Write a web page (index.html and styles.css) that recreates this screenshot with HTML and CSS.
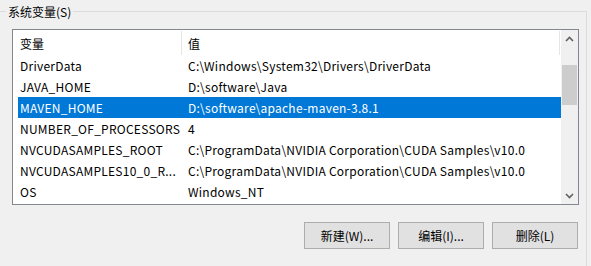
FILE: index.html
```html
<!DOCTYPE html>
<html lang="zh-CN">
<head>
    <meta charset="UTF-8">
    <meta name="viewport" content="width=device-width, initial-scale=1.0">
    <title>系统变量</title>
    <link rel="stylesheet" href="styles.css">
</head>
<body>
    <fieldset class="group">
        <legend>系统变量(S)</legend>
        <div class="listbox">
            <div class="list-main">
                <div class="list-header">
                    <div class="col-name">变量</div>
                    <div class="col-value">值</div>
                </div>
                <div class="row"><span>DriverData</span><span>C:\Windows\System32\Drivers\DriverData</span></div>
                <div class="row"><span>JAVA_HOME</span><span>D:\software\Java</span></div>
                <div class="row selected"><span>MAVEN_HOME</span><span>D:\software\apache-maven-3.8.1</span></div>
                <div class="row"><span>NUMBER_OF_PROCESSORS</span><span>4</span></div>
                <div class="row"><span>NVCUDASAMPLES_ROOT</span><span>C:\ProgramData\NVIDIA Corporation\CUDA Samples\v10.0</span></div>
                <div class="row"><span>NVCUDASAMPLES10_0_R...</span><span>C:\ProgramData\NVIDIA Corporation\CUDA Samples\v10.0</span></div>
                <div class="row"><span>OS</span><span>Windows_NT</span></div>
            </div>
            <div class="scrollbar">
                <div class="arrow">
                    <svg width="9" height="6" viewBox="0 0 9 6"><path d="M1 5 L4.5 1.5 L8 5" fill="none" stroke="#606060" stroke-width="1.6"/></svg>
                </div>
                <div class="track"><div class="thumb"></div></div>
                <div class="arrow">
                    <svg width="9" height="6" viewBox="0 0 9 6"><path d="M1 1 L4.5 4.5 L8 1" fill="none" stroke="#606060" stroke-width="1.6"/></svg>
                </div>
            </div>
        </div>
        <div class="buttons">
            <button class="btn">新建(W)...</button>
            <button class="btn">编辑(I)...</button>
            <button class="btn">删除(L)</button>
        </div>
    </fieldset>
</body>
</html>
```

FILE: styles.css
```css
html, body {
    margin: 0;
    height: 100%;
    overflow: hidden;
}
body {
    background-color: #f0f0f0;
    color: #000;
    font-family: "Microsoft YaHei UI", "Noto Sans CJK SC", sans-serif;
    font-size: 12px;
}
.group {
    margin: 0;
    width: 587px;
    box-sizing: border-box;
    padding: 6px 7px 60px 12px;
    border: 1px solid #dcdcdc;
    border-left: none;
    border-bottom: none;
}
.group legend {
    margin-left: -6px;
    padding: 0 2px;
    line-height: 23px;
}
.listbox {
    display: flex;
    height: 176px;
    box-sizing: border-box;
    border: 1px solid #828790;
    background-color: #fff;
}
.list-main {
    flex: 1;
    overflow: hidden;
}
.list-header {
    display: flex;
    height: 25px;
    width: 547px;
}
.list-header div {
    display: flex;
    align-items: center;
    margin-top: 1px;
    border-right: 1px solid #e5e5e5;
}
.col-name {
    width: 161px;
    padding-left: 7px;
}
.col-value {
    width: 371px;
    padding-left: 6px;
}
.row {
    display: grid;
    grid-template-columns: 168px 1fr;
    height: 21px;
    align-items: center;
    margin-left: 5px;
    padding-left: 2px;
    white-space: nowrap;
    letter-spacing: 0.25px;
}
.row.selected {
    background-color: #0078d7;
    color: #fff;
}
.scrollbar {
    width: 17px;
    display: flex;
    flex-direction: column;
    background-color: #f0f0f0;
}
.arrow {
    height: 17px;
    display: flex;
    align-items: center;
    justify-content: center;
}
.track {
    flex: 1;
    padding: 18px 1px 0 1px;
}
.thumb {
    height: 40px;
    background-color: #cdcdcd;
}
.buttons {
    display: flex;
    justify-content: flex-end;
    gap: 8px;
    margin-top: 17px;
    margin-right: 1px;
}
.btn {
    width: 86px;
    height: 27px;
    border: 1px solid #adadad;
    background-color: #e1e1e1;
    font-family: inherit;
    font-size: 12px;
    color: #000;
    padding: 0;
}
```
